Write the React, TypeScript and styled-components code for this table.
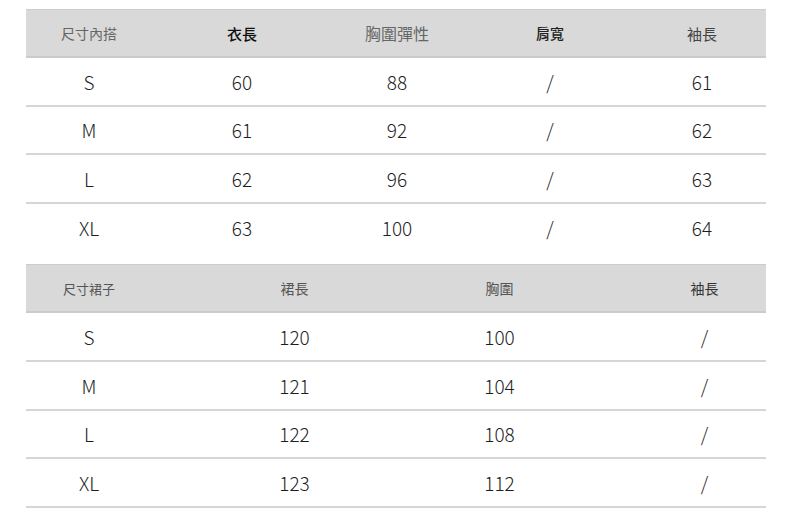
import React from 'react';
import styled, { createGlobalStyle } from 'styled-components';

const GlobalStyle = createGlobalStyle`
  html, body {
    margin: 0;
    padding: 0;
    background: #fff;
  }
  body {
    font-family: "Noto Sans CJK TC", "Noto Sans", sans-serif;
    color: #333;
  }
`;

type HeadCell = { label: string; size: number; weight: number; color: string };

interface SizeTableProps {
  cols: string;
  pad?: number[];
  head: HeadCell[];
  rows: string[][];
  lastBorder?: boolean;
}

const SizeTable: React.FC<SizeTableProps> = ({ cols, pad = [], head, rows, lastBorder }) => (
  <Table>
    <HeaderRow $cols={cols}>
      {head.map((h, i) => (
        <HeaderCell
          key={i}
          $size={h.size}
          $weight={h.weight}
          $color={h.color}
          $pad={pad[i] || 0}
        >
          {h.label}
        </HeaderCell>
      ))}
    </HeaderRow>
    {rows.map((row, r) => (
      <BodyRow
        key={r}
        $cols={cols}
        $border={r < rows.length - 1 || !!lastBorder}
      >
        {row.map((v, i) => (
          <Cell key={i} $pad={pad[i] || 0}>
            {v}
          </Cell>
        ))}
      </BodyRow>
    ))}
  </Table>
);

const App: React.FC = () => {
  const topHead: HeadCell[] = [
    { label: '尺寸內搭', size: 14, weight: 400, color: '#666' },
    { label: '衣長', size: 15, weight: 500, color: '#111' },
    { label: '胸圍彈性', size: 16, weight: 400, color: '#666' },
    { label: '肩寬', size: 14, weight: 500, color: '#222' },
    { label: '袖長', size: 15, weight: 400, color: '#444' },
  ];
  const topRows = [
    ['S', '60', '88', '/', '61'],
    ['M', '61', '92', '/', '62'],
    ['L', '62', '96', '/', '63'],
    ['XL', '63', '100', '/', '64'],
  ];
  const skirtHead: HeadCell[] = [
    { label: '尺寸裙子', size: 13, weight: 400, color: '#555' },
    { label: '裙長', size: 14, weight: 400, color: '#555' },
    { label: '胸圍', size: 14, weight: 400, color: '#555' },
    { label: '袖長', size: 14, weight: 400, color: '#333' },
  ];
  const skirtRows = [
    ['S', '120', '100', '/'],
    ['M', '121', '104', '/'],
    ['L', '122', '108', '/'],
    ['XL', '123', '112', '/'],
  ];

  return (
    <>
      <GlobalStyle />
      <Page>
        <SizeTable
          cols="126px 180px 130px 176px 128px"
          head={topHead}
          rows={topRows}
        />
        <SizeTable
          cols="166px 205px 205px 164px"
          pad={[-40, 0, 0, 41]}
          head={skirtHead}
          rows={skirtRows}
          lastBorder
        />
      </Page>
    </>
  );
};

export default App;

// Styled components
const Page = styled.div`
  width: 790px;
  height: 521px;
  box-sizing: border-box;
  padding: 9px 24px 0 26px;
  display: flex;
  flex-direction: column;
  gap: 12px;
  overflow: hidden;
`;

const Table = styled.div`
  width: 740px;
  display: flex;
  flex-direction: column;
`;

const HeaderRow = styled.div<{ $cols: string }>`
  display: grid;
  grid-template-columns: ${(p) => p.$cols};
  height: 49px;
  box-sizing: border-box;
  background: #d9d9d9;
  border-top: 1px solid #cdcdcd;
  border-bottom: 2px solid #cbcbcb;
  align-items: center;
`;

const HeaderCell = styled.div<{ $size: number; $weight: number; $color: string; $pad: number }>`
  text-align: center;
  font-size: ${(p) => p.$size}px;
  font-weight: ${(p) => p.$weight};
  color: ${(p) => p.$color};
  padding-left: ${(p) => (p.$pad > 0 ? p.$pad : 0)}px;
  padding-right: ${(p) => (p.$pad < 0 ? -p.$pad : 0)}px;
  line-height: 1;
`;

const BodyRow = styled.div<{ $cols: string; $border: boolean }>`
  display: grid;
  grid-template-columns: ${(p) => p.$cols};
  height: 48.6px;
  box-sizing: border-box;
  align-items: center;
  border-bottom: 2px solid ${(p) => (p.$border ? '#d6d6d6' : 'transparent')};
`;

const Cell = styled.div<{ $pad: number }>`
  text-align: center;
  font-size: 19px;
  font-weight: 300;
  color: #1e1e1e;
  padding-left: ${(p) => (p.$pad > 0 ? p.$pad : 0)}px;
  padding-right: ${(p) => (p.$pad < 0 ? -p.$pad : 0)}px;
  line-height: 1;
`;
